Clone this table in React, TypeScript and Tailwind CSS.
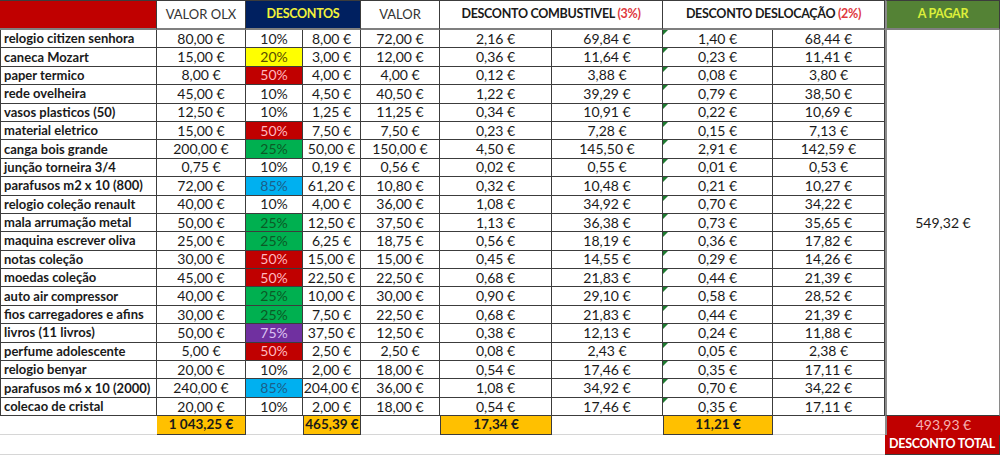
import type { ReactNode } from 'react';

type Row = {
  item: string;
  olx: string;
  pct: string;
  desconto: string;
  valor: string;
  comb: string;
  aposComb: string;
  desl: string;
  aposDesl: string;
};

const rows: Row[] = [
  { item: 'relogio citizen senhora', olx: '80,00 €', pct: '10%', desconto: '8,00 €', valor: '72,00 €', comb: '2,16 €', aposComb: '69,84 €', desl: '1,40 €', aposDesl: '68,44 €' },
  { item: 'caneca Mozart', olx: '15,00 €', pct: '20%', desconto: '3,00 €', valor: '12,00 €', comb: '0,36 €', aposComb: '11,64 €', desl: '0,23 €', aposDesl: '11,41 €' },
  { item: 'paper termico', olx: '8,00 €', pct: '50%', desconto: '4,00 €', valor: '4,00 €', comb: '0,12 €', aposComb: '3,88 €', desl: '0,08 €', aposDesl: '3,80 €' },
  { item: 'rede ovelheira', olx: '45,00 €', pct: '10%', desconto: '4,50 €', valor: '40,50 €', comb: '1,22 €', aposComb: '39,29 €', desl: '0,79 €', aposDesl: '38,50 €' },
  { item: 'vasos plasticos (50)', olx: '12,50 €', pct: '10%', desconto: '1,25 €', valor: '11,25 €', comb: '0,34 €', aposComb: '10,91 €', desl: '0,22 €', aposDesl: '10,69 €' },
  { item: 'material eletrico', olx: '15,00 €', pct: '50%', desconto: '7,50 €', valor: '7,50 €', comb: '0,23 €', aposComb: '7,28 €', desl: '0,15 €', aposDesl: '7,13 €' },
  { item: 'canga bois grande', olx: '200,00 €', pct: '25%', desconto: '50,00 €', valor: '150,00 €', comb: '4,50 €', aposComb: '145,50 €', desl: '2,91 €', aposDesl: '142,59 €' },
  { item: 'junção torneira 3/4', olx: '0,75 €', pct: '10%', desconto: '0,19 €', valor: '0,56 €', comb: '0,02 €', aposComb: '0,55 €', desl: '0,01 €', aposDesl: '0,53 €' },
  { item: 'parafusos m2 x 10 (800)', olx: '72,00 €', pct: '85%', desconto: '61,20 €', valor: '10,80 €', comb: '0,32 €', aposComb: '10,48 €', desl: '0,21 €', aposDesl: '10,27 €' },
  { item: 'relogio coleção renault', olx: '40,00 €', pct: '10%', desconto: '4,00 €', valor: '36,00 €', comb: '1,08 €', aposComb: '34,92 €', desl: '0,70 €', aposDesl: '34,22 €' },
  { item: 'mala arrumação metal', olx: '50,00 €', pct: '25%', desconto: '12,50 €', valor: '37,50 €', comb: '1,13 €', aposComb: '36,38 €', desl: '0,73 €', aposDesl: '35,65 €' },
  { item: 'maquina escrever oliva', olx: '25,00 €', pct: '25%', desconto: '6,25 €', valor: '18,75 €', comb: '0,56 €', aposComb: '18,19 €', desl: '0,36 €', aposDesl: '17,82 €' },
  { item: 'notas coleção', olx: '30,00 €', pct: '50%', desconto: '15,00 €', valor: '15,00 €', comb: '0,45 €', aposComb: '14,55 €', desl: '0,29 €', aposDesl: '14,26 €' },
  { item: 'moedas coleção', olx: '45,00 €', pct: '50%', desconto: '22,50 €', valor: '22,50 €', comb: '0,68 €', aposComb: '21,83 €', desl: '0,44 €', aposDesl: '21,39 €' },
  { item: 'auto air compressor', olx: '40,00 €', pct: '25%', desconto: '10,00 €', valor: '30,00 €', comb: '0,90 €', aposComb: '29,10 €', desl: '0,58 €', aposDesl: '28,52 €' },
  { item: 'fios carregadores e afins', olx: '30,00 €', pct: '25%', desconto: '7,50 €', valor: '22,50 €', comb: '0,68 €', aposComb: '21,83 €', desl: '0,44 €', aposDesl: '21,39 €' },
  { item: 'livros (11 livros)', olx: '50,00 €', pct: '75%', desconto: '37,50 €', valor: '12,50 €', comb: '0,38 €', aposComb: '12,13 €', desl: '0,24 €', aposDesl: '11,88 €' },
  { item: 'perfume adolescente', olx: '5,00 €', pct: '50%', desconto: '2,50 €', valor: '2,50 €', comb: '0,08 €', aposComb: '2,43 €', desl: '0,05 €', aposDesl: '2,38 €' },
  { item: 'relogio benyar', olx: '20,00 €', pct: '10%', desconto: '2,00 €', valor: '18,00 €', comb: '0,54 €', aposComb: '17,46 €', desl: '0,35 €', aposDesl: '17,11 €' },
  { item: 'parafusos m6 x 10 (2000)', olx: '240,00 €', pct: '85%', desconto: '204,00 €', valor: '36,00 €', comb: '1,08 €', aposComb: '34,92 €', desl: '0,70 €', aposDesl: '34,22 €' },
  { item: 'colecao de cristal', olx: '20,00 €', pct: '10%', desconto: '2,00 €', valor: '18,00 €', comb: '0,54 €', aposComb: '17,46 €', desl: '0,35 €', aposDesl: '17,11 €' },
];

// fill + font colour of the discount % cell (conditional formatting look)
const pctStyle: Record<string, string> = {
  '10%': 'bg-white text-[#222]',
  '20%': 'bg-[#ffff00] text-[#5a4d00]',
  '25%': 'bg-[#00b050] text-[#0b5a26]',
  '50%': 'bg-[#c00000] text-[#ffb8be]',
  '75%': 'bg-[#7030a0] text-[#dcc2f2]',
  '85%': 'bg-[#00b0f0] text-[#1b5e8a]',
};

const head = 'border-t border-b-2 border-b-[#7f7f7f] text-[12.5px]';

function Cell({ className = '', children }: { className?: string; children?: ReactNode }) {
  return (
    <div className={`flex items-center justify-center border-r border-b border-[#3c3c3c] leading-none whitespace-nowrap ${className}`}>
      {children}
    </div>
  );
}

function ErrorMark() {
  return (
    <span className="absolute left-0 top-0 h-0 w-0 border-t-[5px] border-r-[5px] border-t-[#1e7b30] border-r-transparent" />
  );
}

export default function App() {
  return (
    <div className="h-[455px] w-[1000px] overflow-hidden bg-white font-['Lato',sans-serif] text-[14px] text-[#1a1a1a]">
      <div className="grid grid-cols-[157px_89px_57px_58px_79px_112px_111px_110px_112px_115px] grid-rows-[30px_repeat(22,18.4px)_20px]">
        {/* header */}
        <Cell className={`${head} bg-[#c00000]`} />
        <Cell className={`${head} text-[13px] text-[#333]`}>VALOR OLX</Cell>
        <Cell className={`${head} col-span-2 bg-[#002060] font-bold tracking-[-0.3px] text-[#f2f23a]`}>DESCONTOS</Cell>
        <Cell className={`${head} text-[13px] text-[#333]`}>VALOR</Cell>
        <Cell className={`${head} col-span-2 font-bold tracking-[-0.3px]`}>
          DESCONTO COMBUSTIVEL&nbsp;<span className="text-[#e0393e]">(3%)</span>
        </Cell>
        <Cell className={`${head} col-span-2 font-bold tracking-[-0.3px]`}>
          DESCONTO DESLOCAÇÃO&nbsp;<span className="text-[#e0393e]">(2%)</span>
        </Cell>
        <Cell className={`${head} border-l-2 border-l-[#8a8a8a] bg-[#548235] font-bold tracking-[-0.3px] text-[#dcef3a]`}>A PAGAR</Cell>

        {rows.map((r, i) => (
          <div key={r.item} className="contents">
            <Cell className="justify-start border-l pl-[3px] text-[13px] font-bold">{r.item}</Cell>
            <Cell>{r.olx}</Cell>
            <Cell className={pctStyle[r.pct]}>{r.pct}</Cell>
            <Cell>{r.desconto}</Cell>
            <Cell>{r.valor}</Cell>
            <Cell>{r.comb}</Cell>
            <Cell>{r.aposComb}</Cell>
            <Cell className="relative">
              <ErrorMark />
              {r.desl}
            </Cell>
            <Cell>{r.aposDesl}</Cell>
            {i === 0 && (
              <Cell className="row-span-21 border-l-2 border-l-[#8a8a8a] border-r-[#8a8a8a] border-b-[#3c3c3c]">549,32 €</Cell>
            )}
          </div>
        ))}

        {/* totals */}
        <div className="border-b border-[#d6d6d6]" />
        <Cell className="bg-[#ffc000] text-[13.5px] font-bold">1 043,25 €</Cell>
        <div className="border-b border-[#d6d6d6]" />
        <Cell className="border-l bg-[#ffc000] text-[13.5px] font-bold">465,39 €</Cell>
        <div className="border-b border-[#d6d6d6]" />
        <Cell className="border-l bg-[#ffc000] text-[13.5px] font-bold">17,34 €</Cell>
        <div className="border-b border-[#d6d6d6]" />
        <Cell className="border-l bg-[#ffc000] text-[13.5px] font-bold">11,21 €</Cell>
        <div className="border-b border-[#d6d6d6]" />
        <Cell className="border-l-2 border-l-[#8a8a8a] border-b-0 border-r-0 bg-[#c00000] text-[#f6b3b3]">493,93 €</Cell>

        <div className="col-span-9 border-b border-[#d6d6d6]" />
        <Cell className="border-0 bg-[#c00000] text-[12.5px] font-bold tracking-[-0.3px] text-white">DESCONTO TOTAL</Cell>
      </div>
    </div>
  );
}
